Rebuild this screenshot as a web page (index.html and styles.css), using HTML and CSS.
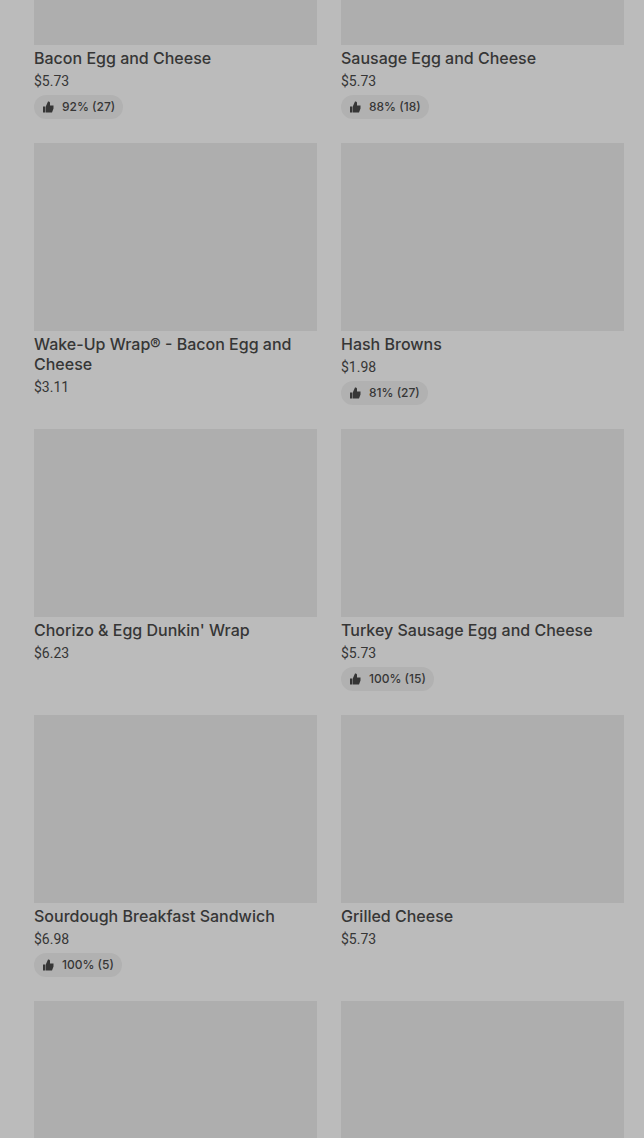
FILE: index.html
```html
<!DOCTYPE html>
<html lang="en">

<head>
    <meta charset="utf-8">
    <meta name="viewport" content="width=device-width, initial-scale=1.0">
    <title>Menu</title>

    <link rel="stylesheet" href="styles.css">
</head>

<body>

    <svg class="sprite" aria-hidden="true">
        <symbol id="thumb" viewBox="0 0 24 24">
            <path d="M2 11h5v12H2zM8 23V10L12 1h2l2 2v6h7v6l-3 8z" />
        </symbol>
    </svg>

    <main class="menu">
        <article class="item">
            <div class="photo photo-top"></div>
            <h3 class="name">Bacon Egg and Cheese</h3>
            <p class="price">$5.73</p>
            <p class="rating"><svg class="thumb"><use href="#thumb" /></svg>92% (27)</p>
        </article>
        <article class="item">
            <div class="photo photo-top"></div>
            <h3 class="name">Sausage Egg and Cheese</h3>
            <p class="price">$5.73</p>
            <p class="rating"><svg class="thumb"><use href="#thumb" /></svg>88% (18)</p>
        </article>
        <article class="item">
            <div class="photo"></div>
            <h3 class="name">Wake-Up Wrap® - Bacon Egg and Cheese</h3>
            <p class="price">$3.11</p>
        </article>
        <article class="item">
            <div class="photo"></div>
            <h3 class="name">Hash Browns</h3>
            <p class="price">$1.98</p>
            <p class="rating"><svg class="thumb"><use href="#thumb" /></svg>81% (27)</p>
        </article>
        <article class="item">
            <div class="photo"></div>
            <h3 class="name">Chorizo &amp; Egg Dunkin' Wrap</h3>
            <p class="price">$6.23</p>
        </article>
        <article class="item">
            <div class="photo"></div>
            <h3 class="name">Turkey Sausage Egg and Cheese</h3>
            <p class="price">$5.73</p>
            <p class="rating"><svg class="thumb"><use href="#thumb" /></svg>100% (15)</p>
        </article>
        <article class="item">
            <div class="photo"></div>
            <h3 class="name">Sourdough Breakfast Sandwich</h3>
            <p class="price">$6.98</p>
            <p class="rating"><svg class="thumb"><use href="#thumb" /></svg>100% (5)</p>
        </article>
        <article class="item">
            <div class="photo"></div>
            <h3 class="name">Grilled Cheese</h3>
            <p class="price">$5.73</p>
        </article>
        <article class="item">
            <div class="photo photo-bottom"></div>
        </article>
        <article class="item">
            <div class="photo photo-bottom"></div>
        </article>
    </main>

</body>

</html>
```

FILE: styles.css
```css
body {
    margin: 0;
    background-color: #bbbbbb;
    color: #363636;
    font-family: Inter, "Liberation Sans", sans-serif;
}

.sprite {
    display: none;
}

.menu {
    display: grid;
    grid-template-columns: 1fr 1fr;
    gap: 24px;
    padding: 0 20px 0 34px;
}

.photo {
    height: 188px;
    background-color: #aeaeae;
}

.photo-top {
    height: 45px;
}

.photo-bottom {
    height: 137px;
}

.name {
    margin: 3px 0 0;
    font-size: 16px;
    font-weight: 500;
    line-height: 20px;
}

.price {
    margin: 3px 0 0;
    font-family: Roboto, "Liberation Sans", sans-serif;
    font-size: 14px;
    line-height: 20px;
}

.rating {
    display: flex;
    align-items: center;
    gap: 8px;
    width: fit-content;
    margin: 4px 0 0;
    padding: 0 8px;
    border-radius: 12px;
    background-color: #b1b1b1;
    font-size: 12px;
    font-weight: 500;
    line-height: 24px;
}

.thumb {
    width: 12px;
    height: 12px;
    fill: #363636;
}

@media only screen and (max-width: 425px) {
    .menu {
        grid-template-columns: 1fr;
    }
}
```
